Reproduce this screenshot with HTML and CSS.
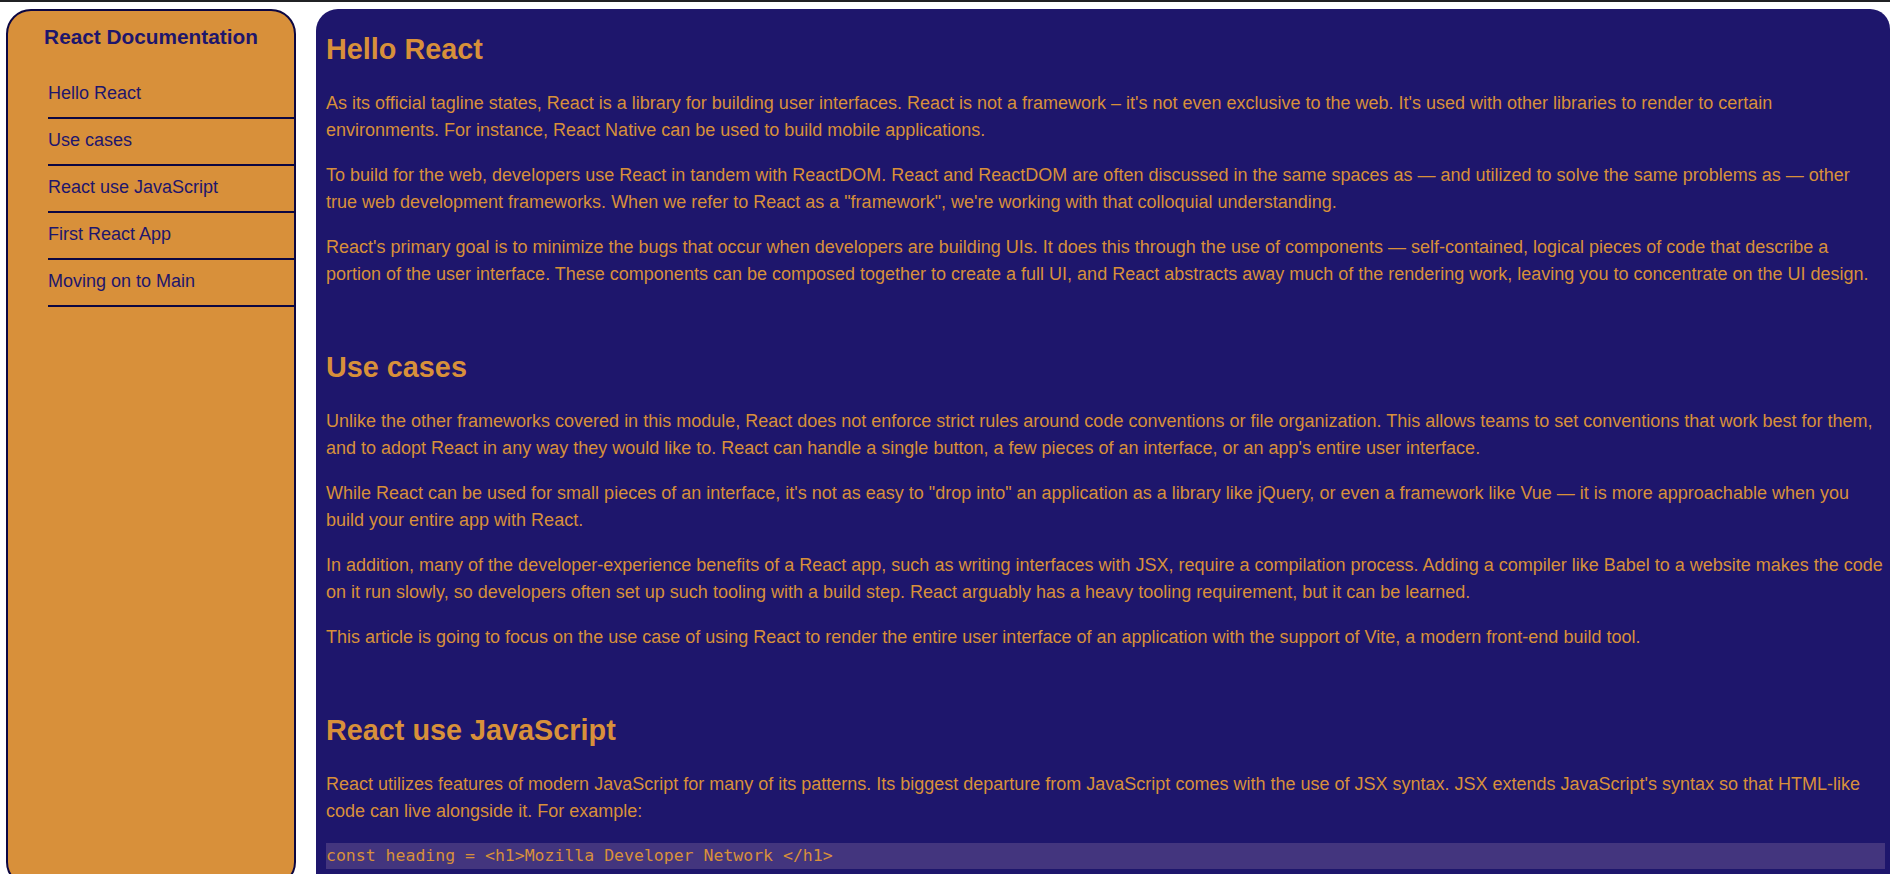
FILE: index.html
```html
<!DOCTYPE html>
<html lang="en">
<head>
<meta charset="utf-8">
<title>React Documentation</title>
<link rel="stylesheet" href="styles.css">
</head>
<body>
<div class="topline"></div>
<div class="layout">
  <aside class="sidebar" id="navbar">
    <h1 class="sidebar-title">React Documentation</h1>
    <ul class="nav-list">
      <li class="nav-item"><a class="nav-link" href="#Hello_React">Hello React</a></li>
      <li class="nav-item"><a class="nav-link" href="#Use_cases">Use cases</a></li>
      <li class="nav-item"><a class="nav-link" href="#React_use_JavaScript">React use JavaScript</a></li>
      <li class="nav-item"><a class="nav-link" href="#First_React_App">First React App</a></li>
      <li class="nav-item"><a class="nav-link" href="#Moving_on_to_Main">Moving on to Main</a></li>
    </ul>
  </aside>
  <main class="content" id="main-doc">
    <section class="section" id="Hello_React">
      <h2 class="section-title">Hello React</h2>
      <p class="text">As its official tagline states, React is a library for building user interfaces. React is not a framework – it's not even exclusive to the web. It's used with other libraries to render to certain environments. For instance, React Native can be used to build mobile applications.</p>
      <p class="text">To build for the web, developers use React in tandem with ReactDOM. React and ReactDOM are often discussed in the same spaces as — and utilized to solve the same problems as — other true web development frameworks. When we refer to React as a "framework", we're working with that colloquial understanding.</p>
      <p class="text">React's primary goal is to minimize the bugs that occur when developers are building UIs. It does this through the use of components — self-contained, logical pieces of code that describe a portion of the user interface. These components can be composed together to create a full UI, and React abstracts away much of the rendering work, leaving you to concentrate on the UI design.</p>
    </section>
    <section class="section" id="Use_cases">
      <h2 class="section-title">Use cases</h2>
      <p class="text">Unlike the other frameworks covered in this module, React does not enforce strict rules around code conventions or file organization. This allows teams to set conventions that work best for them, and to adopt React in any way they would like to. React can handle a single button, a few pieces of an interface, or an app's entire user interface.</p>
      <p class="text">While React can be used for small pieces of an interface, it's not as easy to "drop into" an application as a library like jQuery, or even a framework like Vue — it is more approachable when you build your entire app with React.</p>
      <p class="text">In addition, many of the developer-experience benefits of a React app, such as writing interfaces with JSX, require a compilation process. Adding a compiler like Babel to a website makes the code on it run slowly, so developers often set up such tooling with a build step. React arguably has a heavy tooling requirement, but it can be learned.</p>
      <p class="text">This article is going to focus on the use case of using React to render the entire user interface of an application with the support of Vite, a modern front-end build tool.</p>
    </section>
    <section class="section" id="React_use_JavaScript">
      <h2 class="section-title">React use JavaScript</h2>
      <p class="text">React utilizes features of modern JavaScript for many of its patterns. Its biggest departure from JavaScript comes with the use of JSX syntax. JSX extends JavaScript's syntax so that HTML-like code can live alongside it. For example:</p>
      <pre class="code"><code>const heading = &lt;h1&gt;Mozilla Developer Network &lt;/h1&gt;</code></pre>
      <p class="text">This heading constant is known as a JSX expression. React can use it to render that &lt;h1&gt; tag in our app.</p>
    </section>
    <section class="section" id="First_React_App">
      <h2 class="section-title">First React App</h2>
      <p class="text">To create a new React app, developers can use a build tool such as Vite, which sets up a development server and a production build for the project.</p>
      <pre class="code"><code>npm create vite@latest moz-todo-react -- --template react</code></pre>
    </section>
    <section class="section" id="Moving_on_to_Main">
      <h2 class="section-title">Moving on to Main</h2>
      <p class="text">With the application scaffolded, the next step is to explore the structure of the project and start building components inside the main application file.</p>
    </section>
  </main>
</div>
</body>
</html>
```

FILE: styles.css
```css
html, body {
  margin: 0;
  padding: 0;
  background: #ffffff;
  overflow-x: hidden;
}

body {
  font-family: "Liberation Sans", Arial, sans-serif;
  font-size: 18px;
}

.topline {
  height: 2px;
  background: #202124;
}

.layout {
  display: flex;
  align-items: flex-start;
  gap: 20px;
  padding: 7px 0 0 6px;
}

.sidebar {
  position: sticky;
  top: 9px;
  flex: 0 0 286px;
  width: 286px;
  height: 100vh;
  background: #d8903a;
  border: 2px solid #0c0742;
  border-radius: 25px;
  box-sizing: content-box;
}

.sidebar-title {
  margin: 14px 0 0;
  font-size: 20.8px;
  font-weight: bold;
  line-height: normal;
  text-align: center;
  color: #1e166c;
}

.nav-list {
  list-style: none;
  margin: 23px 0 0;
  padding: 0 0 0 40px;
}

.nav-item {
  border-bottom: 2px solid #0c0742;
}

.nav-link {
  display: block;
  padding: 11px 0 13px;
  color: #1e166c;
  text-decoration: none;
  font-size: 18px;
  line-height: normal;
}

.content {
  flex: 1 1 auto;
  min-width: 0;
  display: flow-root;
  background: #1e166c;
  color: #d8903a;
  border-radius: 22px 20px 0 0;
  padding: 0 5px 40px 10px;
}

.section {
  display: flow-root;
}

.section + .section {
  margin-top: 21px;
}

.section-title {
  margin: 24px 0;
  font-size: 28.8px;
  font-weight: bold;
  line-height: normal;
  color: #d8903a;
}

.text {
  margin: 18px 0;
  line-height: 27px;
}

.code {
  margin: 18px 0;
  padding: 0;
  background: #43357e;
  color: #d8903a;
  font-family: "DejaVu Sans Mono", "Liberation Mono", monospace;
  font-size: 16.5px;
  line-height: 26px;
  white-space: pre;
  overflow: hidden;
}

.code code {
  font-family: inherit;
  font-size: inherit;
}
```
